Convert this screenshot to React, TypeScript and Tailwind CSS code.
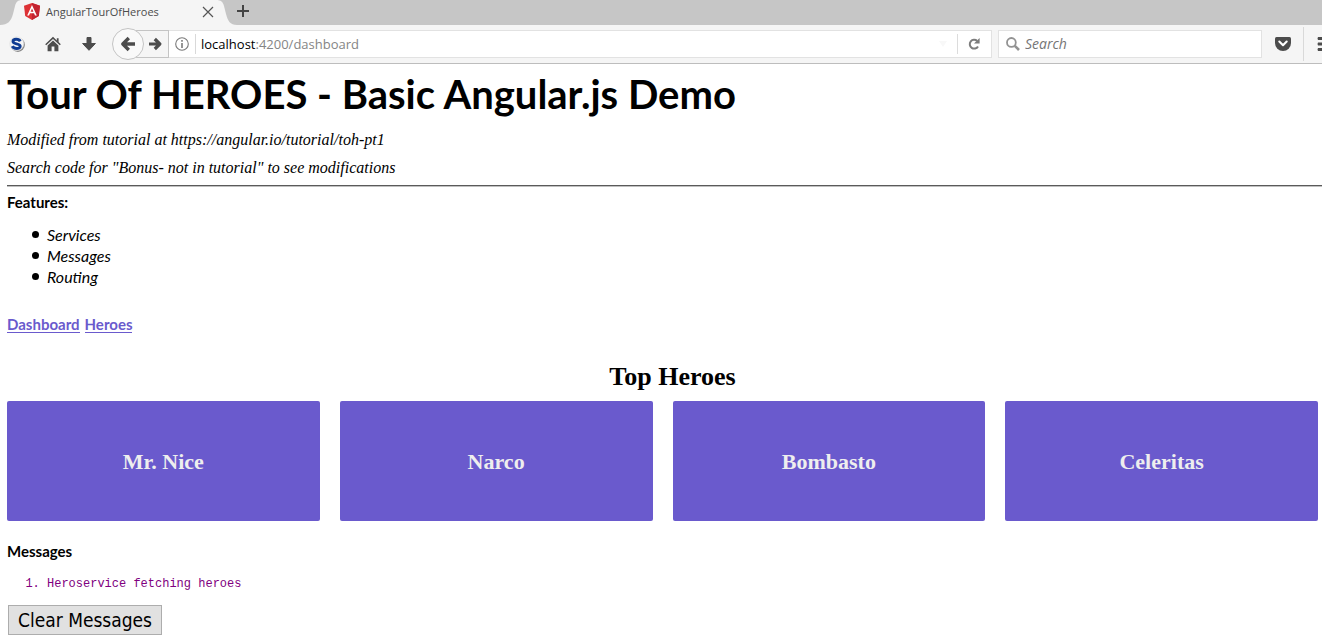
const heroes = ["Mr. Nice", "Narco", "Bombasto", "Celeritas"];
const features = ["Services", "Messages", "Routing"];
const messages = ["Heroservice fetching heroes"];

function TabStrip() {
  return (
    <div className="flex h-[25px] items-stretch bg-[#c6c6c6]">
      <svg className="h-[25px] w-[24px] shrink-0" viewBox="0 0 24 25" aria-hidden="true">
        <path d="M0 25C8 25 11 21 13 14L15 6C16 2 18 0 22 0H24V25Z" fill="#f5f5f5" />
      </svg>
      <div className="flex w-[192px] items-center bg-[#f5f5f5] pb-[2px]">
        <svg className="h-[17px] w-[16px] shrink-0" viewBox="0 0 16 17" aria-hidden="true">
          <path d="M8 0L16 2.8L14.8 13L8 17L1.2 13L0 2.8Z" fill="#dd3236" />
          <path d="M8 0L16 2.8L14.8 13L8 17Z" fill="#c3232f" />
          <path d="M8 2L3.2 12.6H5L6 10.2H10L11 12.6H12.8ZM8 5.4L9.4 8.7H6.6Z" fill="#fff" fillRule="evenodd" />
        </svg>
        <span className="ml-[6px] grow font-['Open_Sans',sans-serif] text-[11px] leading-[16px] text-[#4c4c4c]">
          AngularTourOfHeroes
        </span>
        <button type="button" aria-label="Close tab" className="mr-[2px]">
          <svg className="block h-[12px] w-[12px]" viewBox="0 0 12 12" stroke="#555" strokeWidth="1.2">
            <path d="M1 1L11 11M11 1L1 11" />
          </svg>
        </button>
      </div>
      <svg className="h-[25px] w-[21px] shrink-0" viewBox="0 0 21 25" aria-hidden="true">
        <path d="M0 0C5 0 7 2 8 6L10 14C12 21 14 25 21 25H0Z" fill="#f5f5f5" />
      </svg>
      <button type="button" aria-label="New tab" className="flex items-center pb-[3px]">
        <svg className="block h-[12px] w-[12px]" viewBox="0 0 12 12" stroke="#444" strokeWidth="2">
          <path d="M6 0V12M0 6H12" />
        </svg>
      </button>
    </div>
  );
}

function Toolbar() {
  return (
    <div className="flex h-[39px] items-center overflow-hidden border-b border-[#bdbdbd] bg-[#f5f5f5] pl-[9px] font-['Open_Sans',sans-serif] text-[14px] leading-[20px]">
      <button type="button" aria-label="Extension" className="mr-[20px]">
        <svg className="block h-[16px] w-[16px]" viewBox="0 0 16 16">
          <circle cx="8.8" cy="8.8" r="7.1" fill="#858585" />
          <circle cx="7.8" cy="7.8" r="7" fill="#f4f5f7" stroke="#d8d8d8" strokeWidth=".5" />
          <path d="M11.2 5.3C10 2.6 4 2.6 4 5.5C4 8.6 11.2 7 11.2 10.2C11.2 13.4 4.6 13.2 3.3 10.2" fill="none" stroke="#103c92" strokeWidth="2.9" />
        </svg>
      </button>
      <button type="button" aria-label="Home" className="mr-[20px]">
        <svg className="block h-[16px] w-[16px]" viewBox="0 0 16 16" fill="#4c4c4c">
          <path d="M8 .8L.2 8.2L1.2 9.3L8 3L14.8 9.3L15.8 8.2L13.6 6.1V2.2H11.8V4.4Z" />
          <path d="M8 4.4L2.6 9.4V15.2H6.6V10.6H9.4V15.2H13.4V9.4Z" />
        </svg>
      </button>
      <button type="button" aria-label="Downloads" className="mr-[15px]">
        <svg className="block h-[16px] w-[16px]" viewBox="0 0 16 16" fill="#4c4c4c" stroke="#4c4c4c" strokeLinejoin="round">
          <path d="M6 1.5H10V7.5H14.4L8 14.3L1.6 7.5H6Z" />
        </svg>
      </button>
      <button type="button" aria-label="Back" className="z-10 flex h-[32px] w-[32px] shrink-0 items-center justify-center rounded-full border border-[#c4c4c4] bg-[#f9f9f9]">
        <svg className="block h-[16px] w-[16px]" viewBox="0 0 16 16" fill="none" stroke="#4c4c4c" strokeWidth="3.4" strokeLinejoin="round">
          <path d="M8.8 2L2.8 8L8.8 14M3 8H15" />
        </svg>
      </button>
      <button type="button" aria-label="Forward" className="-ml-[8px] flex h-[28px] w-[33px] shrink-0 items-center justify-end border border-[#c4c4c4] pr-[6px]">
        <svg className="block h-[14px] w-[13px]" viewBox="0 0 13 14" fill="none" stroke="#4c4c4c" strokeWidth="3.2" strokeLinejoin="round">
          <path d="M5.8 2L10.8 7L5.8 12M0 7H10.5" />
        </svg>
      </button>
      <div className="flex h-[28px] grow items-center border border-l-0 border-[#e2e2e2] bg-white">
        <svg className="ml-[6px] h-[14px] w-[14px] shrink-0" viewBox="0 0 14 14" aria-hidden="true">
          <circle cx="7" cy="7" r="6.3" fill="none" stroke="#7a7a7a" strokeWidth="1.1" />
          <path d="M6.2 3H7.8V4.7H6.2ZM6.2 6H7.8V11H6.2Z" fill="#7a7a7a" />
        </svg>
        <div className="ml-[6px] h-[20px] border-l border-[#d9d9d9]" />
        <a href="#dashboard" className="ml-[5px] grow text-[13px] text-[#858585]">
          <span className="text-black">localhost</span>:4200/dashboard
        </a>
        <svg className="mr-[10px] h-[6px] w-[8px]" viewBox="0 0 8 6" fill="#f8f8f8" aria-hidden="true">
          <path d="M0 0H8L4 6Z" />
        </svg>
        <button type="button" aria-label="Reload" className="flex h-[20px] w-[34px] items-center border-l border-[#dcdcdc] pl-[10px]">
          <svg className="block h-[12px] w-[12px]" viewBox="0 0 12 12">
            <path d="M9.2 3A4.4 4.4 0 1 0 10 8.4" fill="none" stroke="#7c7c7c" strokeWidth="2" />
            <path d="M11.6 0V5.6H6Z" fill="#7c7c7c" />
          </svg>
        </button>
      </div>
      <label className="ml-[6px] flex h-[28px] w-[264px] shrink-0 items-center border border-[#e2e2e2] bg-white">
        <svg className="ml-[7px] h-[14px] w-[14px] shrink-0" viewBox="0 0 14 14" fill="none" stroke="#929292" aria-hidden="true">
          <circle cx="5.4" cy="5.4" r="4.4" strokeWidth="1.8" />
          <path d="M8.8 8.8L13 13" strokeWidth="2.6" />
        </svg>
        <input aria-label="Search" placeholder="Search" className="ml-[5px] min-w-0 grow bg-transparent italic outline-none placeholder:text-[#757575]" />
      </label>
      <button type="button" aria-label="Pocket" className="mr-[12px] ml-[13px] shrink-0">
        <svg className="block h-[14px] w-[16px]" viewBox="0 0 16 14">
          <path d="M1.5 0H14.5Q16 0 16 1.5V6A8 8 0 0 1 0 6V1.5Q0 0 1.5 0Z" fill="#4c4c4c" />
          <path d="M4.3 4.5L8 8.2L11.7 4.5" fill="none" stroke="#fff" strokeWidth="2.1" strokeLinecap="round" strokeLinejoin="round" />
        </svg>
      </button>
      <button type="button" aria-label="Menu" className="flex h-[34px] w-[19px] shrink-0 items-center justify-end overflow-hidden border-l border-[#d9d9d9]">
        <svg className="block h-[14px] w-[5px]" viewBox="0 0 5 14" fill="#4c4c4c">
          <path d="M1 0H5V3H1Q0 1.5 1 0ZM1 5.5H5V8.5H1Q0 7 1 5.5ZM1 11H5V14H1Q0 12.5 1 11Z" />
        </svg>
      </button>
    </div>
  );
}

export default function App() {
  return (
    <div className="min-h-screen bg-white text-black">
      <header>
        <TabStrip />
        <Toolbar />
      </header>
      <main className="pl-[7px] font-[Lato,sans-serif] text-[15px] leading-[21px]">
        <h1 className="pt-[6px] text-[40px] leading-[48px] font-bold">Tour Of HEROES - Basic Angular.js Demo</h1>
        <div className="pt-[8px] font-['Liberation_Serif',serif] text-[16px] leading-[28px] italic">
          <p>Modified from tutorial at https://angular.io/tutorial/toh-pt1</p>
          <p>Search code for "Bonus- not in tutorial" to see modifications</p>
        </div>
        <hr className="mt-[3px] h-[2px] border-t border-b border-t-[#5a5a5a] border-b-[#c0c0c0]" />
        <h2 className="mt-[5px] font-bold">Features:</h2>
        <ul className="mt-[11px] pl-[25px] text-[16px] italic">
          {features.map((f) => (
            <li key={f} className="flex items-center gap-[8px] before:h-[7px] before:w-[7px] before:rounded-full before:bg-black">
              {f}
            </li>
          ))}
        </ul>
        <nav className="mt-[27px] flex gap-[5px] font-bold">
          <a href="#dashboard" className="border-b border-[#6a5acd] pt-[2px] leading-[16px] text-[#6a5acd]">Dashboard</a>
          <a href="#heroes" className="border-b border-[#6a5acd] pt-[2px] leading-[16px] text-[#6a5acd]">Heroes</a>
        </nav>
        <section className="mt-[28px] pr-[4px] font-['Liberation_Serif',serif] font-bold">
          <h3 className="pl-[20px] text-center text-[26px] leading-[32px]">Top Heroes</h3>
          <div className="mt-[8px] grid grid-cols-4 gap-[20px]">
            {heroes.map((h) => (
              <a key={h} href="#detail" className="flex h-[120px] items-center justify-center rounded-[2px] bg-[#6a5acd] pt-[2px] text-[22px] leading-[28px] text-[#eee]">
                {h}
              </a>
            ))}
          </div>
        </section>
        <section className="mt-[20px]">
          <h2 className="font-bold">Messages</h2>
          <ol className="mt-[12px] list-decimal pl-[40px] font-['Liberation_Mono',monospace] text-[12px] text-[#800080]">
            {messages.map((m) => (
              <li key={m}>{m}</li>
            ))}
          </ol>
          <button type="button" className="mt-[10px] ml-px h-[30px] border border-[#adadad] bg-[#e1e1e1] px-[9px] font-['DejaVu_Sans_Condensed','Noto_Sans',sans-serif] text-[19px] leading-[28px]">
            Clear Messages
          </button>
        </section>
      </main>
    </div>
  );
}
